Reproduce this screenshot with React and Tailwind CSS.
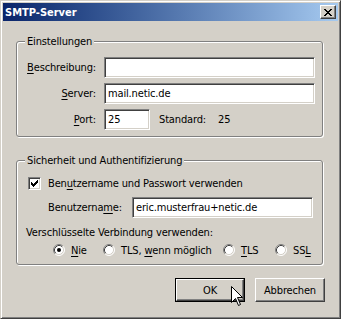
import React from "react";

const raised =
  "border border-t-white border-l-white border-r-[#404040] border-b-[#404040] shadow-[inset_-1px_-1px_0_#808080] bg-[#d4d0c8]";
const sunken =
  "border border-t-[#808080] border-l-[#808080] border-r-white border-b-white shadow-[inset_1px_1px_0_#404040,inset_-1px_-1px_0_#d4d0c8] bg-white";

function U({ children }) {
  return <span className="underline underline-offset-2">{children}</span>;
}

function PixelArt({ rows, color, className }) {
  const rects = [];
  rows.forEach((r, y) =>
    r.split("").forEach((c, x) => {
      if (c === "X") rects.push(<rect key={x + "-" + y} x={x} y={y} width="1" height="1" fill={color} />);
    })
  );
  return (
    <svg width={rows[0].length} height={rows.length} className={className} shapeRendering="crispEdges">
      {rects}
    </svg>
  );
}

function Radio({ checked }) {
  return (
    <svg width="12" height="12" viewBox="0 0 12 12" className="shrink-0">
      <circle cx="6" cy="6" r="5" fill="#fff" />
      <path d="M2.11 9.89 A5.5 5.5 0 0 1 9.89 2.11" fill="none" stroke="#808080" strokeWidth="1" />
      <path d="M2.82 9.18 A4.5 4.5 0 0 1 9.18 2.82" fill="none" stroke="#404040" strokeWidth="1" />
      <path d="M9.89 2.11 A5.5 5.5 0 0 1 2.11 9.89" fill="none" stroke="#fff" strokeWidth="1" />
      <path d="M9.18 2.82 A4.5 4.5 0 0 1 2.82 9.18" fill="none" stroke="#d4d0c8" strokeWidth="1" />
      {checked && <circle cx="6" cy="6" r="2" fill="#000" />}
    </svg>
  );
}

function Checkbox() {
  return (
    <div className={"w-[13px] h-[13px] shrink-0 flex items-center justify-center " + sunken}>
      <PixelArt
        color="#000"
        rows={["......X", ".....XX", "X...XXX", "XX.XXX.", "XXXXX..", ".XXX...", "..X...."]}
      />
    </div>
  );
}

function Field({ label, width, children }) {
  return (
    <div className="flex items-center h-[21px]">
      <div className="w-[79px] text-right">{label}</div>
      <div className={"ml-[8px] h-[21px] flex items-center pl-[3px] " + sunken + " " + width}>{children}</div>
    </div>
  );
}

export default function App() {
  return (
    <div className="w-[341px] h-[319px] bg-[#d4d0c8] border border-t-[#d4d0c8] border-l-[#d4d0c8] border-r-[#404040] border-b-[#404040] shadow-[inset_1px_1px_0_#fff,inset_-1px_-1px_0_#808080] p-[2px] text-[11px] leading-[13px] tracking-[-0.15px] text-black font-['Tahoma','DejaVu_Sans_Condensed','Liberation_Sans',sans-serif] select-none">
      {/* title bar */}
      <div className="h-[18px] flex items-center justify-between bg-gradient-to-r from-[#0a246a] to-[#a6caf0] pl-[2px] pr-[2px]">
        <span className="text-white font-bold text-[11px] tracking-normal">SMTP-Server</span>
        <div className={"w-[16px] h-[14px] flex items-center justify-center " + raised}>
          <PixelArt color="#000" rows={["XX....XX", ".XX..XX.", "..XXXX..", "...XX...", "..XXXX..", ".XX..XX.", "XX....XX"]} />
        </div>
      </div>

      {/* Einstellungen */}
      <div className="ml-[13px] mt-[20px] w-[307px] border border-[#808080] rounded-[3px] shadow-[1px_1px_0_#fff,inset_1px_1px_0_#fff] pb-[6px]">
        <div className="-mt-[7px] ml-[8px] px-[2px] w-fit bg-[#d4d0c8]">Einstellungen</div>
        <div className="mt-[9px] flex flex-col gap-[5px]">
          <Field label={<><U>B</U>eschreibung:</>} width="w-[211px]" />
          <Field label={<><U>S</U>erver:</>} width="w-[211px]">mail.netic.de</Field>
          <div className="flex items-center h-[21px]">
            <Field label={<><U>P</U>ort:</>} width="w-[46px]">25</Field>
            <span className="ml-[9px]">Standard:</span>
            <span className="ml-[12px]">25</span>
          </div>
        </div>
      </div>

      {/* Sicherheit */}
      <div className="ml-[13px] mt-[23px] w-[307px] border border-[#808080] rounded-[3px] shadow-[1px_1px_0_#fff,inset_1px_1px_0_#fff] pb-[7px]">
        <div className="-mt-[7px] ml-[8px] px-[2px] w-fit bg-[#d4d0c8]">Sicherheit und Authentifizierung</div>
        <div className="mt-[8px] h-[17px] flex items-center pl-[11px] gap-[7px]">
          <Checkbox />
          <span>
            Ben<U>u</U>tzername und Passwort verwenden
          </span>
        </div>
        <div className="mt-[5px] flex items-center h-[21px] pl-[31px]">
          <span className="w-[84px]">
            Benutzerna<U>m</U>e:
          </span>
          <div className={"h-[21px] w-[181px] flex items-center pl-[3px] " + sunken}>eric.musterfrau+netic.de</div>
        </div>
        <div className="mt-[7px] h-[14px] flex items-center pl-[9px]">Verschlüsselte Verbindung verwenden:</div>
        <div className="mt-[4px] h-[14px] flex items-center pl-[36px]">
          <div className="flex items-center gap-[6px] w-[50px]">
            <Radio checked />
            <span>
              <U>N</U>ie
            </span>
          </div>
          <div className="flex items-center gap-[6px] w-[120px]">
            <Radio />
            <span>
              TLS, <U>w</U>enn möglich
            </span>
          </div>
          <div className="flex items-center gap-[6px] w-[52px]">
            <Radio />
            <span>
              <U>T</U>LS
            </span>
          </div>
          <div className="flex items-center gap-[6px]">
            <Radio />
            <span>
              SS<U>L</U>
            </span>
          </div>
        </div>
      </div>

      {/* buttons */}
      <div className="mt-[13px] flex justify-end gap-[10px] pr-[13px]">
        <div className="relative w-[70px] h-[24px] border border-black">
          <div className={"w-full h-full flex items-center justify-center " + raised}>OK</div>
          <svg width="13" height="21" viewBox="0 0 13 21" className="absolute left-[55px] top-[7px]">
            <path d="M0.5 0.5 L0.5 16.5 L4.5 12.5 L7.5 19.5 L9.5 18.5 L6.5 11.5 L11.5 11.5 Z" fill="#fff" stroke="#000" strokeWidth="1" />
          </svg>
        </div>
        <div className={"w-[70px] h-[24px] flex items-center justify-center " + raised}>Abbrechen</div>
      </div>
    </div>
  );
}
